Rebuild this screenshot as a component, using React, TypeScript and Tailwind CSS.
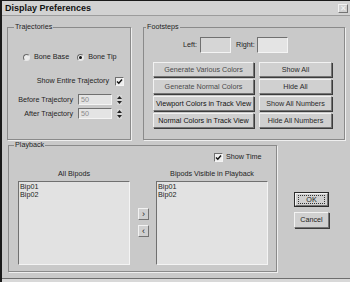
import React from 'react';

const font = { fontFamily: '"Liberation Sans", Arial, sans-serif' };

const etched = 'border border-[#8a8a8a] shadow-[1px_1px_0_#efefef]';
const raised =
  'flex items-center justify-center border border-t-[#f2f2f2] border-l-[#f2f2f2] border-r-[#747474] border-b-[#747474] bg-[#d0d0d0] shadow-[1px_1px_0_#3c3c3c]';
const sunken = 'border border-t-[#707070] border-l-[#707070] border-r-[#f4f4f4] border-b-[#f4f4f4]';

const Radio: React.FC<{ checked?: boolean; label: string }> = ({ checked, label }) => (
  <div className="flex items-center gap-[4px]">
    <span className="flex h-[7px] w-[7px] items-center justify-center rounded-full border border-t-[#6a6a6a] border-l-[#6a6a6a] border-r-[#e8e8e8] border-b-[#e8e8e8] bg-[#ececec]">
      {checked && <span className="h-[3px] w-[3px] rounded-full bg-[#111]" />}
    </span>
    <span>{label}</span>
  </div>
);

const Check: React.FC = () => (
  <span className={`flex h-[9px] w-[9px] items-center justify-center bg-[#eeeeee] ${sunken}`}>
    <svg width="7" height="7" viewBox="0 0 7 7">
      <polyline points="1,3.5 2.8,5.3 6,1.5" fill="none" stroke="#111" strokeWidth="1.4" />
    </svg>
  </span>
);

const Spinner: React.FC = () => (
  <span className="flex h-[10px] w-[5px] flex-col items-center justify-center gap-[2px] bg-[#d6d6d6]">
    <svg width="5" height="3" viewBox="0 0 5 3">
      <polygon points="2.5,0 5,3 0,3" fill="#222" />
    </svg>
    <svg width="5" height="3" viewBox="0 0 5 3">
      <polygon points="0,0 5,0 2.5,3" fill="#222" />
    </svg>
  </span>
);

const NumberRow: React.FC<{ label: string; mt: string }> = ({ label, mt }) => (
  <div className={`flex h-[11px] items-center ${mt}`}>
    <span className="w-[66px] pr-[1px] text-right">{label}</span>
    <span className={`ml-[4px] flex h-[11px] w-[34px] items-center bg-[#e4e4e4] pl-[2px] text-[#8a8a8a] ${sunken}`}>50</span>
    <span className="ml-[5px]">
      <Spinner />
    </span>
  </div>
);

const footButtons = [
  ['Generate Various Colors', 'Show All'],
  ['Generate Normal Colors', 'Hide All'],
  ['Viewport Colors in Track View', 'Show All Numbers'],
  ['Normal Colors in Track View', 'Hide All Numbers'],
];

const ListBox: React.FC<{ title: string }> = ({ title }) => (
  <div className="flex w-[112px] flex-col">
    <div className="h-[10px] text-center leading-[10px]">{title}</div>
    <div className={`mt-[2px] h-[84px] bg-[#e2e2e2] pl-[1px] pt-[1px] leading-[8px] ${sunken}`}>
      <div>Bip01</div>
      <div>Bip02</div>
    </div>
  </div>
);

export default function App() {
  return (
    <div
      style={font}
      className="flex h-[282px] w-[350px] flex-col overflow-hidden border-l-2 border-t border-l-[#1a1a1a] border-t-[#1a1a1a] bg-[#c9c9c9] text-[7.2px] leading-[10px] text-[#1e1e1e]"
    >
      {/* title bar */}
      <div className="flex h-[14px] items-center justify-between bg-[#d2d2d2] pl-[3px] pr-[2px]">
        <span className="text-[9px] font-bold leading-[14px] text-[#111]">Display Preferences</span>
        <span className={`h-[9px] w-[10px] text-[8px] leading-[7px] text-[#f4f4f4] ${raised} bg-[#9a9a9a] shadow-none`}>
          ✕
        </span>
      </div>
      <div className="h-[1px] bg-[#9c9c9c]" />

      {/* body */}
      <div className="h-[262px] pl-[5px] pt-[6px]">
        <div className="flex gap-[12px]">
          <fieldset className={`h-[118px] w-[124px] ${etched}`}>
            <legend className="ml-[6px] px-[1px] leading-[10px]">Trajectories</legend>
            <div className="mt-[20px] flex h-[10px] items-center gap-[8px] pl-[15px]">
              <Radio label="Bone Base" />
              <Radio checked label="Bone Tip" />
            </div>
            <div className="mt-[14px] flex h-[10px] items-center justify-end gap-[6px] pr-[6px]">
              <span>Show Entire Trajectory</span>
              <Check />
            </div>
            <NumberRow label="Before Trajectory" mt="mt-[8px]" />
            <NumberRow label="After Trajectory" mt="mt-[3px]" />
          </fieldset>

          <fieldset className={`h-[118px] w-[202px] ${etched}`}>
            <legend className="ml-[2px] px-[1px] leading-[10px]">Footsteps</legend>
            <div className="mt-[5px] flex h-[16px] items-center pl-[39px]">
              <span>Left:</span>
              <span className={`ml-[3px] h-[16px] w-[31px] bg-[#d6d6d6] ${sunken}`} />
              <span className="ml-[5px]">Right:</span>
              <span className={`ml-[2px] h-[16px] w-[31px] bg-[#e4e4e4] ${sunken}`} />
            </div>
            <div className="mt-[9px] grid grid-cols-[101px_73px] gap-x-[5px] gap-y-[2px] pl-[9px]">
              {footButtons.map(([a, b], i) => (
                <React.Fragment key={a}>
                  <div className={`h-[15px] ${raised} ${i < 2 ? 'text-[#4a4a4a]' : 'text-[#111]'}`}>{a}</div>
                  <div className={`h-[15px] ${raised} text-[#2a2a2a]`}>{b}</div>
                </React.Fragment>
              ))}
            </div>
          </fieldset>
        </div>

        <div className="flex">
          <fieldset className={`ml-[1px] h-[132px] w-[269px] ${etched}`}>
            <legend className="ml-[5px] px-[1px] leading-[10px]">Playback</legend>
            <div className="mt-[2px] flex h-[10px] items-center gap-[3px] pl-[205px]">
              <Check />
              <span>Show Time</span>
            </div>
            <div className="mt-[7px] flex pl-[9px]">
              <ListBox title="All Bipods" />
              <div className="ml-[8px] flex w-[11px] flex-col gap-[5px] pt-[39px]">
                <div className={`h-[12px] w-[11px] text-[9px] leading-[9px] ${raised} shadow-none`}>›</div>
                <div className={`h-[12px] w-[11px] text-[9px] leading-[9px] ${raised} shadow-none`}>‹</div>
              </div>
              <div className="ml-[7px]">
                <ListBox title="Bipods Visible in Playback" />
              </div>
            </div>
          </fieldset>

          <div className="ml-[17px] flex flex-col gap-[5px] pt-[52px]">
            <div className="h-[15px] w-[35px] border border-[#2a2a2a]">
              <div className={`h-full w-full ${raised} shadow-none`}>
                <span className="flex h-[9px] w-[27px] items-center justify-center border border-dotted border-[#333]">
                  OK
                </span>
              </div>
            </div>
            <div className={`h-[16px] w-[35px] ${raised}`}>Cancel</div>
          </div>
        </div>
      </div>

      <div className="h-[1px] bg-[#6e6e6e]" />
      <div className="flex-1 bg-[#d8d8d8]" />
    </div>
  );
}
